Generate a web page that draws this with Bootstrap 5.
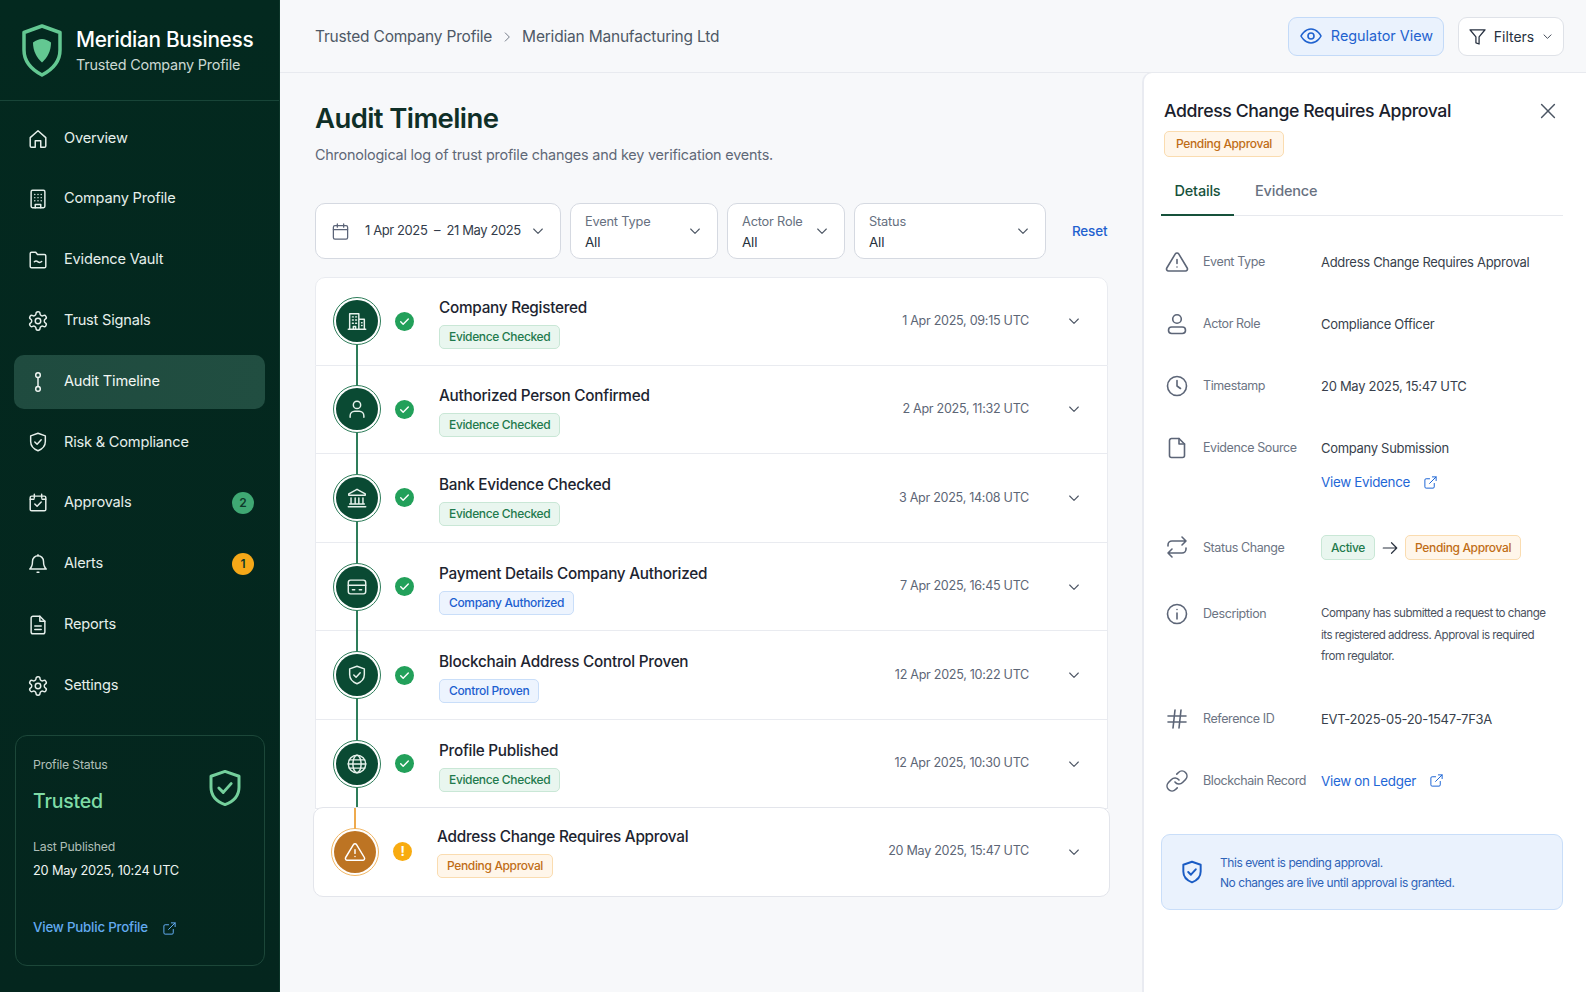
<!DOCTYPE html>
<html lang="en">
<head>
<meta charset="UTF-8">
<meta name="viewport" content="width=device-width, initial-scale=1.0">
<title>Audit Timeline</title>
<link href="https://cdn.jsdelivr.net/npm/bootstrap@5.3.0/dist/css/bootstrap.min.css" rel="stylesheet">
<style>
body { font-family: Inter, "Liberation Sans", sans-serif; background: #f7f8fa; color: #1f2733; height: 992px; overflow: hidden; letter-spacing: -.2px; }
.ico { width: 22px; height: 22px; fill: none; stroke: currentColor; stroke-width: 1.6; stroke-linecap: round; stroke-linejoin: round; flex: none; }
.app { height: 992px; }
.main-col { min-width: 0; }

/* sidebar */
.side { width: 280px; background: linear-gradient(180deg, #03291f, #04261e); color: #e6efeb; flex: none; border-right: 1px solid #0c3529; }
.brand { height: 101px; padding: 0 0 0 21px; gap: 13px; border-bottom: 1px solid #184538; }
.brand-text { padding-top: 2px; }
.brand-name { font-size: 20.8px; font-weight: 500; color: #fff; line-height: 27px; letter-spacing: -.3px; }
.brand-sub { font-size: 14.4px; color: #cbd8d2; line-height: 22px; margin-top: 1px; }
.side-nav { padding: 10.5px 14px 0 14px; gap: 6.8px; }
.side-link { height: 54px; padding: 0 13px; color: #e6efeb; font-size: 14.6px; gap: 15px; border-radius: 10px; }
.side-link:hover { color: #fff; }
.side-link.now { background: linear-gradient(100deg, #1f4b3f, #214e41); color: #f2f7f4; }
.side-count { width: 22px; height: 22px; border-radius: 50%; font-size: 12px; font-weight: 600; color: #0f3a2a; margin-left: auto; margin-right: -2px; }
.status-box { margin: 22.5px 14.5px 0 14.5px; height: 231px; border: 1px solid #1c4739; border-radius: 12px; padding: 19px 17.5px; position: relative; }
.status-lbl { font-size: 12.3px; color: #afbfb8; line-height: 20px; }
.status-val { font-size: 19.5px; font-weight: 500; color: #7fdca6; line-height: 28px; margin-top: 12px; }
.status-lbl.second { margin-top: 22px; }
.status-date { font-size: 12.8px; color: #eef4f1; line-height: 22px; margin-top: 3px; }
.status-link { font-size: 13.3px; font-weight: 500; color: #62aaf0; text-decoration: none; gap: 14px; margin-top: 36px; }
.status-link .ico { width: 15px; height: 15px; }
.status-shield { position: absolute; right: 18px; top: 31px; width: 42px; height: 42px; color: #74d09c; stroke-width: 1.7; }

/* header */
.topbar { height: 73px; padding: 0 22px 0 35px; border-bottom: 1px solid #e8eaef; flex: none; }
.crumbs { font-size: 15.5px; color: #4e5866; gap: 8px; margin-top: 2px; }
.crumbs .ico { width: 14px; height: 14px; color: #6b7280; }
.top-btns { gap: 14px; }
.btn-view { height: 39px; width: 156px; background: #eaf2fd; border: 1px solid #c3daf8; color: #1f62cf; font-size: 14.4px; border-radius: 9px; gap: 8px; padding: 0; }
.btn-view .ico { width: 24px; height: 24px; }
.btn-filt { height: 39px; width: 106px; background: #fff; border: 1px solid #dfe2e8; color: #273140; font-size: 14px; border-radius: 9px; gap: 7px; padding: 0; }
.btn-filt .ico { width: 19px; height: 19px; }
.btn-filt .ico.tiny { width: 13px; height: 13px; }

/* main */
.work { width: 862px; padding: 27px 34px 0 35px; flex: none; }
.work h1 { font-size: 27.5px; font-weight: 600; color: #0f2f27; line-height: 36px; margin: 0 0 8px; letter-spacing: -.6px; }
.work-sub { font-size: 14.4px; color: #5f6877; line-height: 22px; }
.filter-row { margin-top: 37px; height: 56px; gap: 9px; }
.pick { height: 56px; background: #fff; border: 1px solid #d5d9e1; border-radius: 10px; padding: 0 14px; }
.pick-lbl { font-size: 12.8px; color: #667080; line-height: 20px; margin-top: 1px; }
.pick-val { font-size: 13.5px; color: #27303d; line-height: 20px; }
.pick .ico { width: 16px; height: 16px; color: #4b5563; margin-left: auto; }
.pick-date { width: 246px; font-size: 13px; color: #333c4a; padding-left: 15px; white-space: nowrap; letter-spacing: -.4px; }
.pick-date svg.cal { width: 19px; height: 19px; margin: 0 15px 0 0; color: #5b6478; }
.pick-w1 { width: 148px; }
.pick-w2 { width: 118px; }
.pick-w3 { width: 192px; }
.reset-link { font-size: 13.5px; color: #1f62cf; text-decoration: none; margin-left: 17px; font-weight: 500; }

.tl { margin-top: 18px; background: #fff; border-radius: 10px; width: 793px; }
.tl-row { height: 88.6px; padding: 0 25px 0 17px; background: transparent; border-color: #e9ebf0; }
.tl-node { width: 48px; height: 48px; border-radius: 50%; border: 1.5px solid #2e7d5a; padding: 2px; background: #0a4a33; background-clip: content-box; color: #e6f2ec; position: relative; flex: none; }
.tl-node .ico { width: 22px; height: 22px; }
.tl-node::after { content: ""; position: absolute; left: 50%; margin-left: -1px; top: 100%; width: 2px; height: 42px; background: #2e7d5a; }
.tl-row.to-end .tl-node::after { height: 21px; }
.tl-row.pend { height: 90px; margin: -2px -2px 0 -2px; padding-right: 27px; background: #fff; border: 1px solid #e3e5eb !important; border-radius: 10px !important; z-index: 2; }
.tl-row.pend .tl-node { background-color: #bd7423; border-color: #f2b765; color: #fff; }
.tl-row.pend .tl-node::after { display: none; }
.tl-row.pend .tl-node::before { content: ""; position: absolute; left: 50%; margin-left: -1px; bottom: 100%; width: 2px; height: 21px; background: #eeaa4e; }
.tl-row.pend .tl-body { margin-top: 1px; }
.tl-mark { width: 19px; height: 19px; margin: 0 25px 0 14px; flex: none; border-radius: 50%; background: #22a05a; color: #fff; }
.tl-mark .ico { width: 13px; height: 13px; stroke-width: 2.6; }
.tl-mark.warn { background: #f8ab10; font-size: 13px; font-weight: 700; line-height: 1; }
.tl-body { margin-top: 4px; }
.tl-title { font-size: 15.3px; font-weight: 500; color: #1d2430; line-height: 22px; margin-bottom: 4px; letter-spacing: -.25px; }
.chip { display: inline-flex; align-items: center; height: 24px; padding: 0 9px; border-radius: 5px; font-size: 12px; font-weight: 500; border: 1px solid; letter-spacing: -.35px; }
.chip-tall { height: 25px; }
.chip-g { background: #e9f6ef; border-color: #c9e7d6; color: #1f7a4d; }
.chip-b { background: #edf4fe; border-color: #c9def9; color: #1d5fd0; }
.chip-o { background: #fff6ea; border-color: #fadcb0; color: #bf6d16; }
.tl-time { font-size: 12.6px; color: #5d6676; margin-left: auto; margin-right: 37px; letter-spacing: -.3px; }
.tl-chev { width: 16px; height: 16px; color: #4a5362; }

/* side panel */
.panel { flex: 1; min-width: 0; background: #fff; border-left: 2px solid #e9ebf1; border-top: 1px solid #e8eaef; border-top-left-radius: 10px; margin-top: -1px; padding: 26px 23px 0 20px; height: 920px; }
.panel-title { font-size: 17.7px; font-weight: 500; color: #1a212c; line-height: 24px; letter-spacing: -.4px; }
.panel-close { background: none; border: 0; padding: 0; color: #4b5563; width: 22px; height: 22px; margin-right: 4px; line-height: 0; }
.panel-chip { height: 26px; padding: 0 11px; margin-top: 8px; }
.panel-tabs { margin: 14px 0 0 -3px; border-bottom: 1px solid #e7e9ee; gap: 0; }
.panel-tabs .nav-link { border: 0; background: none; font-size: 14.5px; font-weight: 500; color: #687181; padding: 0; height: 45px; line-height: 40px; }
.panel-tabs .nav-link.active { color: #16513b; border-bottom: 2px solid #16513b; width: 73px; text-align: center; background: none; margin-bottom: -1px; }
.panel-tabs .tab-two { margin-left: 21px; }
.facts { margin-top: 35px; gap: 39px; }
.fact { line-height: 22px; font-size: 13px; }
.fact-ico { width: 24px; height: 24px; color: #5c6577; margin: -1px 0 0 1px; flex: none; }
.fact-lbl { width: 118px; margin-left: 14px; font-size: 12.5px; color: #6c7483; flex: none; letter-spacing: -.4px; }
.fact-val { color: #383f4c; font-size: 13px; letter-spacing: -.3px; }
.fact-link { color: #1f67d6; text-decoration: none; gap: 13px; font-size: 13.4px; }
.fact-link .ico { width: 15px; height: 15px; }
.fact-sub { margin-top: 12px; }
.fact-status { margin-top: 3px; }
.fact-desc { margin-top: 4px; }
.fact-ref { margin-top: 1px; }
.desc-txt { font-size: 11.6px; line-height: 21.5px; letter-spacing: -.5px; color: #4b5260; width: 232px; }
.arrow-ico { width: 18px; height: 18px; margin: 0 6px; color: #2b3340; }
.note { margin: 41px 0 0 -3px; height: 76px; background: #eaf2fd; border: 1px solid #c9def9; border-radius: 9px; padding: 0 0 0 17px; gap: 15px; color: #2e63b8; font-size: 12px; line-height: 20px; letter-spacing: -.45px; }
.note svg { width: 26px; height: 30px; color: #1a5cc4; stroke-width: 1.8; }
.note-txt { padding-top: 3px; }
</style>
</head>
<body>
<svg width="0" height="0" class="position-absolute">
  <symbol id="i-home" viewBox="0 0 24 24"><path d="M3.500 10.500 12 3l8.500 7.500V19.500a1.500 1.500 0 0 1-1.500 1.500h-4v-7h-6v7H5a1.500 1.500 0 0 1-1.500-1.500z"/></symbol>
  <symbol id="i-bld" viewBox="0 0 24 24"><rect x="4.500" y="2.500" width="15" height="19" rx="1.500"/><path d="M8.500 7h.01M12 7h.01M15.500 7h.01M8.500 10.500h.01M12 10.500h.01M15.500 10.500h.01M8.500 14h.01M12 14h.01M15.500 14h.01M9 21.500V18h6v3.500"/></symbol>
  <symbol id="i-bld2" viewBox="0 0 24 24"><path d="M4 21V4h10v17M14 10h6v11M2.500 21h19M7 7.500h1M10.500 7.500h1M7 11h1M10.500 11h1M7 14.500h1M10.500 14.500h1M8 21v-3h2.500v3M17 14h.5M17 17h.5"/></symbol>
  <symbol id="i-folder" viewBox="0 0 24 24"><path d="M3.500 5a1.500 1.500 0 0 1 1.500-1.500h4.500l2 2.500H19a1.500 1.500 0 0 1 1.500 1.500V19a1.500 1.500 0 0 1-1.500 1.500H5A1.500 1.500 0 0 1 3.500 19z"/><path d="M8 14c1.500-1.500 2.500-1.200 4 0s2.500 1 4-.3"/></symbol>
  <symbol id="i-gear" viewBox="0 0 24 24"><path d="M12.220 2h-.44a2 2 0 0 0-2 2v.18a2 2 0 0 1-1 1.730l-.43.25a2 2 0 0 1-2 0l-.15-.08a2 2 0 0 0-2.730.73l-.22.38a2 2 0 0 0 .73 2.730l.15.1a2 2 0 0 1 1 1.720v.51a2 2 0 0 1-1 1.740l-.15.09a2 2 0 0 0-.73 2.730l.22.38a2 2 0 0 0 2.730.73l.15-.08a2 2 0 0 1 2 0l.43.25a2 2 0 0 1 1 1.730V20a2 2 0 0 0 2 2h.44a2 2 0 0 0 2-2v-.18a2 2 0 0 1 1-1.730l.43-.25a2 2 0 0 1 2 0l.15.08a2 2 0 0 0 2.730-.73l.22-.39a2 2 0 0 0-.73-2.730l-.15-.08a2 2 0 0 1-1-1.740v-.5a2 2 0 0 1 1-1.740l.15-.09a2 2 0 0 0 .73-2.730l-.22-.38a2 2 0 0 0-2.730-.73l-.15.08a2 2 0 0 1-2 0l-.43-.25a2 2 0 0 1-1-1.730V4a2 2 0 0 0-2-2z"/><circle cx="12" cy="12" r="3"/></symbol>
  <symbol id="i-line" viewBox="0 0 24 24"><circle cx="12" cy="4.500" r="2.500"/><circle cx="12" cy="19.500" r="2.500"/><path d="M12 7v10"/></symbol>
  <symbol id="i-shield" viewBox="0 0 24 24"><path d="M12 2.500 4 5.300v6.200c0 4.800 3.300 8.200 8 10 4.700-1.800 8-5.200 8-10V5.300z"/><path d="m8.500 12 2.500 2.500 4.500-5"/></symbol>
  <symbol id="i-calchk" viewBox="0 0 24 24"><rect x="3.500" y="4.500" width="17" height="16" rx="1.500"/><path d="M8 2.500v4M16 2.500v4M3.500 8h4M16.500 8h4M8.500 13l2.500 2.500 4.500-4.500"/></symbol>
  <symbol id="i-bell" viewBox="0 0 24 24"><path d="M6 9a6 6 0 0 1 12 0c0 6 2.500 8 3 8.500H3c.5-.5 3-2.500 3-8.500"/><path d="M11 21h2M12 3V2"/></symbol>
  <symbol id="i-doc" viewBox="0 0 24 24"><path d="M14 2.500H6.500a2 2 0 0 0-2 2v15a2 2 0 0 0 2 2h11a2 2 0 0 0 2-2V8z"/><path d="M14 2.500V8h5.500M8.500 13h7M8.500 17h7"/></symbol>
  <symbol id="i-file" viewBox="0 0 24 24"><path d="M14 2.500H6.500a2 2 0 0 0-2 2v15a2 2 0 0 0 2 2h11a2 2 0 0 0 2-2V8z"/><path d="M14 2.500V8h5.500"/></symbol>
  <symbol id="i-out" viewBox="0 0 24 24"><path d="M18 13.500V19a2 2 0 0 1-2 2H5a2 2 0 0 1-2-2V8a2 2 0 0 1 2-2h5.500"/><path d="M15 3h6v6M10.500 13.500 21 3"/></symbol>
  <symbol id="i-eye" viewBox="0 0 24 24"><path d="M2 12s3.500-7 10-7 10 7 10 7-3.500 7-10 7-10-7-10-7z"/><circle cx="12" cy="12" r="3"/></symbol>
  <symbol id="i-funnel" viewBox="0 0 24 24"><path d="M21.500 3.500h-19l7.500 9V20l4 1.500v-9z"/></symbol>
  <symbol id="i-chev" viewBox="0 0 24 24"><path d="m5.500 9 6.500 6.500L18.500 9"/></symbol>
  <symbol id="i-next" viewBox="0 0 24 24"><path d="m9 5 7 7-7 7"/></symbol>
  <symbol id="i-cal" viewBox="0 0 24 24"><rect x="3" y="4.500" width="18" height="17" rx="2"/><path d="M8 2.500v4M16 2.500v4M3 9.500h18"/></symbol>
  <symbol id="i-user" viewBox="0 0 24 24"><circle cx="12" cy="7.500" r="4"/><path d="M4.500 21v-1.500a5 5 0 0 1 5-5h5a5 5 0 0 1 5 5V21"/></symbol>
  <symbol id="i-person" viewBox="0 0 24 24"><circle cx="12" cy="7" r="4.300"/><rect x="3.500" y="15" width="17" height="6.500" rx="3.200"/></symbol>
  <symbol id="i-bank" viewBox="0 0 24 24"><path d="M12 2.500 3 7.500v1.500h18V7.500zM5.500 12v6M10 12v6M14 12v6M18.500 12v6M4 18.500h16M2.500 21.500h19"/></symbol>
  <symbol id="i-card" viewBox="0 0 24 24"><rect x="2.500" y="4.500" width="19" height="15" rx="2.500"/><path d="M2.500 10h19M7 15h2.500M14.500 15H17"/></symbol>
  <symbol id="i-globe" viewBox="0 0 24 24"><circle cx="12" cy="12" r="9.500"/><path d="M2.500 12h19M3.700 7.500h16.600M3.700 16.500h16.600"/><ellipse cx="12" cy="12" rx="4.500" ry="9.500"/></symbol>
  <symbol id="i-warn" viewBox="0 0 24 24"><path d="M10.300 3.900 1.800 18a2 2 0 0 0 1.700 3h17a2 2 0 0 0 1.700-3L13.700 3.900a2 2 0 0 0-3.400 0z"/><path d="M12 9.500v4M12 17h.01"/></symbol>
  <symbol id="i-clock" viewBox="0 0 24 24"><circle cx="12" cy="12" r="9.500"/><path d="M12 6.500V12l3.500 2.500"/></symbol>
  <symbol id="i-swap" viewBox="0 0 24 24"><path d="m17 2 4 4-4 4M3 11v-1a4 4 0 0 1 4-4h14M7 22l-4-4 4-4M21 13v1a4 4 0 0 1-4 4H3"/></symbol>
  <symbol id="i-info" viewBox="0 0 24 24"><circle cx="12" cy="12" r="9.500"/><path d="M12 11v6M12 7.500h.01"/></symbol>
  <symbol id="i-hash" viewBox="0 0 24 24"><path d="M3 9h18M3 15h18M10 3 8 21M16 3l-2 18"/></symbol>
  <symbol id="i-chain" viewBox="0 0 24 24"><path d="M10 13a5 5 0 0 0 7.540.54l3-3a5 5 0 0 0-7.070-7.070l-1.720 1.710"/><path d="M14 11a5 5 0 0 0-7.540-.54l-3 3a5 5 0 0 0 7.070 7.070l1.710-1.710"/></symbol>
  <symbol id="i-x" viewBox="0 0 24 24"><path d="M5 5l14 14M19 5 5 19"/></symbol>
  <symbol id="i-check" viewBox="0 0 24 24"><path d="m5 12.500 4.500 4.500L19 7.500"/></symbol>
  <symbol id="i-right" viewBox="0 0 24 24"><path d="M3 12h18M14 5l7 7-7 7"/></symbol>
</svg>

<div class="app d-flex">
  <!-- Sidebar -->
  <aside class="side d-flex flex-column">
    <div class="brand d-flex align-items-center">
      <svg width="42" height="55" viewBox="0 0 42 55" fill="none"><path d="M21 3 3 9.500V27c0 11.500 7.500 19.500 18 25 10.500-5.500 18-13.500 18-25V9.500z" stroke="#63c892" stroke-width="3.500" stroke-linejoin="round"/><path d="M21 16c3 0 6 1.500 9 3.500 0 8.500-3.500 15-9 20-5.500-5-9-11.500-9-20 3-2 6-3.500 9-3.500z" fill="#63c892"/></svg>
      <div class="brand-text">
        <div class="brand-name">Meridian Business</div>
        <div class="brand-sub">Trusted Company Profile</div>
      </div>
    </div>
    <nav class="side-nav nav flex-column">
      <a class="side-link nav-link d-flex align-items-center" href="#"><svg class="ico"><use href="#i-home"/></svg>Overview</a>
      <a class="side-link nav-link d-flex align-items-center" href="#"><svg class="ico"><use href="#i-bld"/></svg>Company Profile</a>
      <a class="side-link nav-link d-flex align-items-center" href="#"><svg class="ico"><use href="#i-folder"/></svg>Evidence Vault</a>
      <a class="side-link nav-link d-flex align-items-center" href="#"><svg class="ico"><use href="#i-gear"/></svg>Trust Signals</a>
      <a class="side-link now nav-link d-flex align-items-center" href="#"><svg class="ico"><use href="#i-line"/></svg>Audit Timeline</a>
      <a class="side-link nav-link d-flex align-items-center" href="#"><svg class="ico"><use href="#i-shield"/></svg>Risk &amp; Compliance</a>
      <a class="side-link nav-link d-flex align-items-center" href="#"><svg class="ico"><use href="#i-calchk"/></svg>Approvals<span class="side-count d-flex align-items-center justify-content-center" style="background:#3fa873">2</span></a>
      <a class="side-link nav-link d-flex align-items-center" href="#"><svg class="ico"><use href="#i-bell"/></svg>Alerts<span class="side-count d-flex align-items-center justify-content-center" style="background:#f5a818">1</span></a>
      <a class="side-link nav-link d-flex align-items-center" href="#"><svg class="ico"><use href="#i-doc"/></svg>Reports</a>
      <a class="side-link nav-link d-flex align-items-center" href="#"><svg class="ico"><use href="#i-gear"/></svg>Settings</a>
    </nav>
    <div class="status-box">
      <div class="status-lbl">Profile Status</div>
      <div class="status-val">Trusted</div>
      <div class="status-lbl second">Last Published</div>
      <div class="status-date">20 May 2025, 10:24 UTC</div>
      <a class="status-link d-flex align-items-center" href="#">View Public Profile <svg class="ico"><use href="#i-out"/></svg></a>
      <svg class="ico status-shield"><use href="#i-shield"/></svg>
    </div>
  </aside>

  <div class="main-col flex-grow-1 d-flex flex-column">
    <!-- Header -->
    <header class="topbar d-flex align-items-center justify-content-between">
      <div class="crumbs d-flex align-items-center">
        <span>Trusted Company Profile</span>
        <svg class="ico"><use href="#i-next"/></svg>
        <span>Meridian Manufacturing Ltd</span>
      </div>
      <div class="top-btns d-flex">
        <button class="btn btn-view d-flex align-items-center justify-content-center" type="button"><svg class="ico"><use href="#i-eye"/></svg>Regulator View</button>
        <button class="btn btn-filt d-flex align-items-center justify-content-center" type="button"><svg class="ico"><use href="#i-funnel"/></svg>Filters<svg class="ico tiny"><use href="#i-chev"/></svg></button>
      </div>
    </header>

    <div class="d-flex flex-grow-1">
      <!-- Timeline column -->
      <main class="work">
        <h1>Audit Timeline</h1>
        <div class="work-sub">Chronological log of trust profile changes and key verification events.</div>

        <div class="filter-row d-flex align-items-center">
          <div class="pick pick-date d-flex align-items-center"><svg class="ico cal"><use href="#i-cal"/></svg><span>1 Apr 2025 &nbsp;–&nbsp; 21 May 2025</span><svg class="ico"><use href="#i-chev"/></svg></div>
          <div class="pick pick-w1 d-flex align-items-center"><div><div class="pick-lbl">Event Type</div><div class="pick-val">All</div></div><svg class="ico"><use href="#i-chev"/></svg></div>
          <div class="pick pick-w2 d-flex align-items-center"><div><div class="pick-lbl">Actor Role</div><div class="pick-val">All</div></div><svg class="ico"><use href="#i-chev"/></svg></div>
          <div class="pick pick-w3 d-flex align-items-center"><div><div class="pick-lbl">Status</div><div class="pick-val">All</div></div><svg class="ico"><use href="#i-chev"/></svg></div>
          <a class="reset-link" href="#">Reset</a>
        </div>

        <ul class="tl list-group">
          <li class="tl-row list-group-item d-flex align-items-center">
            <div class="tl-node d-flex align-items-center justify-content-center"><svg class="ico"><use href="#i-bld2"/></svg></div>
            <div class="tl-mark d-flex align-items-center justify-content-center"><svg class="ico"><use href="#i-check"/></svg></div>
            <div class="tl-body"><div class="tl-title">Company Registered</div><span class="chip chip-g">Evidence Checked</span></div>
            <div class="tl-time">1 Apr 2025, 09:15 UTC</div>
            <svg class="ico tl-chev"><use href="#i-chev"/></svg>
          </li>
          <li class="tl-row list-group-item d-flex align-items-center">
            <div class="tl-node d-flex align-items-center justify-content-center"><svg class="ico"><use href="#i-user"/></svg></div>
            <div class="tl-mark d-flex align-items-center justify-content-center"><svg class="ico"><use href="#i-check"/></svg></div>
            <div class="tl-body"><div class="tl-title">Authorized Person Confirmed</div><span class="chip chip-g">Evidence Checked</span></div>
            <div class="tl-time">2 Apr 2025, 11:32 UTC</div>
            <svg class="ico tl-chev"><use href="#i-chev"/></svg>
          </li>
          <li class="tl-row list-group-item d-flex align-items-center">
            <div class="tl-node d-flex align-items-center justify-content-center"><svg class="ico"><use href="#i-bank"/></svg></div>
            <div class="tl-mark d-flex align-items-center justify-content-center"><svg class="ico"><use href="#i-check"/></svg></div>
            <div class="tl-body"><div class="tl-title">Bank Evidence Checked</div><span class="chip chip-g">Evidence Checked</span></div>
            <div class="tl-time">3 Apr 2025, 14:08 UTC</div>
            <svg class="ico tl-chev"><use href="#i-chev"/></svg>
          </li>
          <li class="tl-row list-group-item d-flex align-items-center">
            <div class="tl-node d-flex align-items-center justify-content-center"><svg class="ico"><use href="#i-card"/></svg></div>
            <div class="tl-mark d-flex align-items-center justify-content-center"><svg class="ico"><use href="#i-check"/></svg></div>
            <div class="tl-body"><div class="tl-title">Payment Details Company Authorized</div><span class="chip chip-b">Company Authorized</span></div>
            <div class="tl-time">7 Apr 2025, 16:45 UTC</div>
            <svg class="ico tl-chev"><use href="#i-chev"/></svg>
          </li>
          <li class="tl-row list-group-item d-flex align-items-center">
            <div class="tl-node d-flex align-items-center justify-content-center"><svg class="ico"><use href="#i-shield"/></svg></div>
            <div class="tl-mark d-flex align-items-center justify-content-center"><svg class="ico"><use href="#i-check"/></svg></div>
            <div class="tl-body"><div class="tl-title">Blockchain Address Control Proven</div><span class="chip chip-b">Control Proven</span></div>
            <div class="tl-time">12 Apr 2025, 10:22 UTC</div>
            <svg class="ico tl-chev"><use href="#i-chev"/></svg>
          </li>
          <li class="tl-row to-end list-group-item d-flex align-items-center">
            <div class="tl-node d-flex align-items-center justify-content-center"><svg class="ico"><use href="#i-globe"/></svg></div>
            <div class="tl-mark d-flex align-items-center justify-content-center"><svg class="ico"><use href="#i-check"/></svg></div>
            <div class="tl-body"><div class="tl-title">Profile Published</div><span class="chip chip-g">Evidence Checked</span></div>
            <div class="tl-time">12 Apr 2025, 10:30 UTC</div>
            <svg class="ico tl-chev"><use href="#i-chev"/></svg>
          </li>
          <li class="tl-row pend list-group-item d-flex align-items-center">
            <div class="tl-node d-flex align-items-center justify-content-center"><svg class="ico"><use href="#i-warn"/></svg></div>
            <div class="tl-mark warn d-flex align-items-center justify-content-center">!</div>
            <div class="tl-body"><div class="tl-title">Address Change Requires Approval</div><span class="chip chip-o">Pending Approval</span></div>
            <div class="tl-time">20 May 2025, 15:47 UTC</div>
            <svg class="ico tl-chev"><use href="#i-chev"/></svg>
          </li>
        </ul>
      </main>

      <!-- Detail panel -->
      <section class="panel">
        <div class="d-flex align-items-center justify-content-between">
          <div class="panel-title">Address Change Requires Approval</div>
          <button class="panel-close" type="button" aria-label="Close"><svg class="ico"><use href="#i-x"/></svg></button>
        </div>
        <span class="chip chip-o panel-chip">Pending Approval</span>

        <ul class="panel-tabs nav nav-tabs">
          <li class="nav-item"><a class="nav-link active" href="#">Details</a></li>
          <li class="nav-item tab-two"><a class="nav-link" href="#">Evidence</a></li>
        </ul>

        <div class="facts d-flex flex-column">
          <div class="fact d-flex"><svg class="ico fact-ico"><use href="#i-warn"/></svg><div class="fact-lbl">Event Type</div><div class="fact-val">Address Change Requires Approval</div></div>
          <div class="fact d-flex"><svg class="ico fact-ico"><use href="#i-person"/></svg><div class="fact-lbl">Actor Role</div><div class="fact-val">Compliance Officer</div></div>
          <div class="fact d-flex"><svg class="ico fact-ico"><use href="#i-clock"/></svg><div class="fact-lbl">Timestamp</div><div class="fact-val">20 May 2025, 15:47 UTC</div></div>
          <div class="fact d-flex"><svg class="ico fact-ico"><use href="#i-file"/></svg><div class="fact-lbl">Evidence Source</div><div class="fact-val"><div>Company Submission</div><a class="fact-link fact-sub d-flex align-items-center" href="#">View Evidence <svg class="ico"><use href="#i-out"/></svg></a></div></div>
          <div class="fact fact-status d-flex align-items-center"><svg class="ico fact-ico"><use href="#i-swap"/></svg><div class="fact-lbl">Status Change</div><div class="fact-val d-flex align-items-center"><span class="chip chip-g chip-tall">Active</span><svg class="ico arrow-ico"><use href="#i-right"/></svg><span class="chip chip-o chip-tall">Pending Approval</span></div></div>
          <div class="fact fact-desc d-flex"><svg class="ico fact-ico"><use href="#i-info"/></svg><div class="fact-lbl">Description</div><div class="desc-txt">Company has submitted a request to change its registered address. Approval is required from regulator.</div></div>
          <div class="fact fact-ref d-flex"><svg class="ico fact-ico"><use href="#i-hash"/></svg><div class="fact-lbl">Reference ID</div><div class="fact-val">EVT-2025-05-20-1547-7F3A</div></div>
          <div class="fact d-flex"><svg class="ico fact-ico"><use href="#i-chain"/></svg><div class="fact-lbl">Blockchain Record</div><div class="fact-val"><a class="fact-link d-flex align-items-center" href="#">View on Ledger <svg class="ico"><use href="#i-out"/></svg></a></div></div>
        </div>

        <div class="note d-flex align-items-center">
          <svg class="ico"><use href="#i-shield"/></svg>
          <div class="note-txt">This event is pending approval.<br>No changes are live until approval is granted.</div>
        </div>
      </section>
    </div>
  </div>
</div>
<script src="https://cdn.jsdelivr.net/npm/bootstrap@5.3.0/dist/js/bootstrap.bundle.min.js"></script>
</body>
</html>
